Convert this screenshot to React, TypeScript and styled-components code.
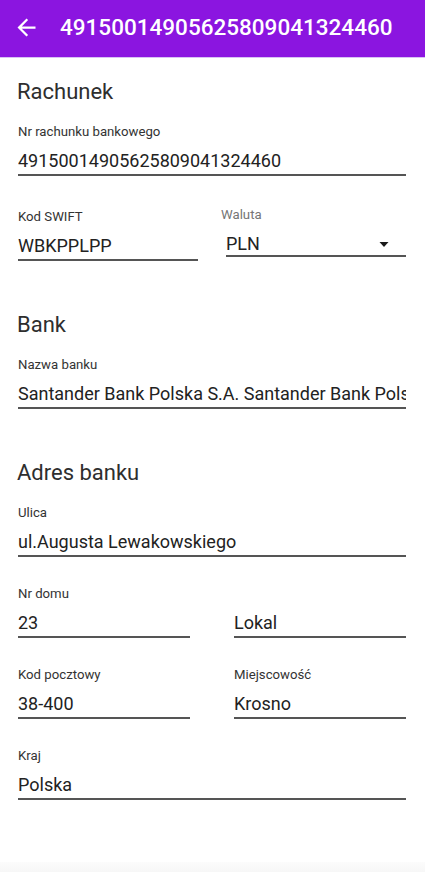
import * as React from "react";
import styled, { createGlobalStyle } from "styled-components";

const GlobalStyle = createGlobalStyle`
  html, body {
    margin: 0;
    padding: 0;
    background: #ffffff;
    font-family: Roboto, "Noto Sans", "Liberation Sans", sans-serif;
  }
  * {
    box-sizing: border-box;
  }
`;

interface FieldProps {
  label?: string;
  value: string;
}

function Field({ label, value }: FieldProps) {
  return (
    <FieldBox>
      <Label>{label || "\u00a0"}</Label>
      <Value>{value}</Value>
    </FieldBox>
  );
}

function SelectField({ label, value }: FieldProps) {
  return (
    <SelectBox>
      <SelectLabel>{label}</SelectLabel>
      <SelectValue>
        <span>{value}</span>
        <svg width="24" height="24" viewBox="0 0 24 24">
          <path d="M7.5 10l4.5 5 4.5-5z" fill="#1a1a1a" />
        </svg>
      </SelectValue>
    </SelectBox>
  );
}

export default function App() {
  return (
    <Page>
      <GlobalStyle />
      <TopBar>
        <BackButton aria-label="back">
          <svg width="27" height="27" viewBox="0 0 24 24">
            <path
              d="M20 11H7.83l5.59-5.59L12 4l-8 8 8 8 1.41-1.41L7.83 13H20v-2z"
              fill="#ffffff"
            />
          </svg>
        </BackButton>
        <Title>49150014905625809041324460</Title>
      </TopBar>

      <Content>
        <Section>
          <SectionTitle>Rachunek</SectionTitle>
          <Field label="Nr rachunku bankowego" value="49150014905625809041324460" />
          <SwiftRow>
            <Field label="Kod SWIFT" value="WBKPPLPP" />
            <SelectField label="Waluta" value="PLN" />
          </SwiftRow>
        </Section>

        <Section>
          <SectionTitle>Bank</SectionTitle>
          <Field
            label="Nazwa banku"
            value="Santander Bank Polska S.A. Santander Bank Polska S.A."
          />
        </Section>

        <Section>
          <SectionTitle>Adres banku</SectionTitle>
          <Stack>
            <Field label="Ulica" value="ul.Augusta Lewakowskiego" />
            <Row>
              <Field label="Nr domu" value="23" />
              <Field value="Lokal" />
            </Row>
            <Row>
              <Field label="Kod pocztowy" value="38-400" />
              <Field label="Miejscowość" value="Krosno" />
            </Row>
            <Field label="Kraj" value="Polska" />
          </Stack>
        </Section>
      </Content>

      <BottomFade />
    </Page>
  );
}

const Page = styled.div`
  min-height: 100vh;
  display: flex;
  flex-direction: column;
  background: #ffffff;
`;

const TopBar = styled.header`
  height: 57px;
  display: flex;
  align-items: center;
  padding: 0 0 3px 13px;
  background: #8b15e0;
  box-shadow: 0 1px 0 #d8c2f3;
`;

const BackButton = styled.button`
  width: 27px;
  height: 27px;
  padding: 0;
  margin: 0 20px 0 0;
  border: none;
  background: transparent;
  display: flex;
  align-items: center;
  justify-content: center;
  cursor: pointer;
`;

const Title = styled.h1`
  margin: 0;
  color: #ffffff;
  font-size: 22.5px;
  font-weight: 500;
  line-height: 1.2;
  white-space: nowrap;
`;

const Content = styled.main`
  padding: 21px 19px 0 18px;
`;

const Section = styled.section`
  & + & {
    margin-top: 50px;
  }
`;

const SectionTitle = styled.h2`
  margin: 0 0 18px -1px;
  font-size: 22px;
  font-weight: 400;
  line-height: 28px;
  color: #2e2e2e;
`;

const Stack = styled.div`
  display: flex;
  flex-direction: column;
  gap: 29px;
`;

const Row = styled.div`
  display: grid;
  grid-template-columns: 1fr 1fr;
  column-gap: 44px;
`;

const SwiftRow = styled.div`
  display: grid;
  grid-template-columns: 180px 1fr;
  column-gap: 23px;
  margin-top: 33px;
`;

const FieldBox = styled.div`
  display: flex;
  flex-direction: column;
  min-width: 0;
`;

const Label = styled.div`
  font-size: 13.2px;
  line-height: 16px;
  color: #333333;
  margin-bottom: 9px;
  white-space: nowrap;
`;

const Value = styled.div`
  font-size: 18px;
  line-height: 24px;
  color: #222222;
  padding-bottom: 1px;
  border-bottom: 2px solid #555555;
  white-space: nowrap;
  overflow: hidden;
`;

const SelectBox = styled.div`
  display: flex;
  flex-direction: column;
  min-width: 0;
  margin-top: -2px;
`;

const SelectLabel = styled.div`
  font-size: 13.2px;
  line-height: 16px;
  color: #757575;
  margin-bottom: 9px;
`;

const SelectValue = styled.div`
  display: flex;
  align-items: center;
  justify-content: space-between;
  margin-left: 5px;
  height: 25px;
  font-size: 18px;
  line-height: 24px;
  color: #222222;
  border-bottom: 2px solid #555555;

  svg {
    margin-right: 10px;
  }
`;

const BottomFade = styled.div`
  margin-top: auto;
  height: 10px;
  background: linear-gradient(#fcfcfc, #f7f7f7);
`;
